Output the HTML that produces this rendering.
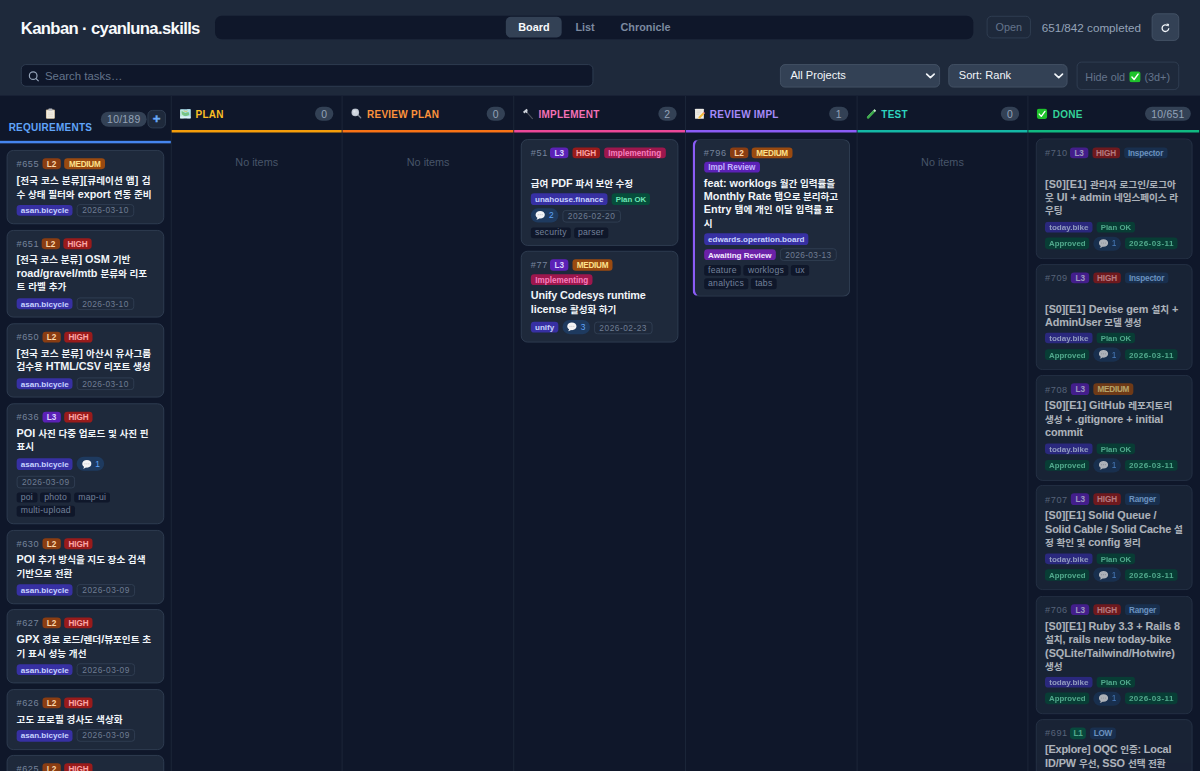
<!DOCTYPE html><html lang="ko"><head><meta charset="utf-8"><title>Kanban · cyanluna.skills</title><style>*{box-sizing:border-box;margin:0;padding:0}
html,body{width:1200px;height:771px;overflow:hidden;background:#0f172a}
body{font-family:"Liberation Sans","Noto Sans CJK KR",sans-serif;color:#f1f5f9}
#app{position:absolute;left:0;top:0;width:1440px;height:926px;transform:scale(.8333333);transform-origin:0 0;overflow:hidden;background:#0f172a}
.em{display:inline-block;flex:none}
#top{position:absolute;left:0;top:0;width:1440px;height:115px;background:#1e293b}
#top>*{position:absolute}
h1{left:25px;top:21.5px;font-size:20px;line-height:25px;font-weight:700;letter-spacing:-.78px;color:#f8fafc;white-space:nowrap}
.views{left:258px;top:18.5px;width:909.5px;height:28px;border-radius:8px;background:#0f172a;display:flex;justify-content:center;align-items:center;gap:2px;padding-left:1px}
.views span{height:24.5px;line-height:25.5px;padding:0 14.5px;border-radius:6px;font-size:13px;font-weight:700;color:#7c8aa0}
.views .on{background:#334155;color:#f8fafc}
.open{left:1184px;top:19.3px;width:53px;height:26.7px;border:1px solid #334155;border-radius:6px;font-size:13px;line-height:25.5px;text-align:center;color:#64748b}
.stat{left:1250px;top:24.8px;font-size:14px;line-height:17px;color:#94a3b8;white-space:nowrap}
.refresh{left:1382px;top:16.3px;width:33px;height:32.6px;border:1px solid #475569;border-radius:6px;background:#334155;display:flex;align-items:center;justify-content:center}
.search{left:24.5px;top:77px;width:687px;height:27px;border:1px solid #334155;border-radius:6px;background:#0f172a;display:flex;align-items:center;padding-left:8.5px;padding-top:1.5px;font-size:13.7px;color:#64748b;gap:7px}
.sel{top:77px;height:28px;border:1px solid #475569;border-radius:6px;background:#334155;font-size:13.3px;line-height:26px;color:#f1f5f9;padding-left:12px;white-space:nowrap}
.sel svg{position:absolute;right:3.5px;top:8px}
.hide{left:1291.5px;top:73.5px;width:123.5px;height:34px;border:1px solid #334155;border-radius:6px;font-size:13px;line-height:35px;color:#64748b;text-align:center;white-space:nowrap}
#board{position:absolute;left:0;top:115px;width:1440px;height:811px;background:#0f172a}
.col{position:absolute;top:0;width:205.714px;height:811px;border-right:1px solid #1e293b}
.ch{position:absolute;left:0;top:0;width:100%;border-bottom:3px solid #888;display:flex;align-items:center;padding:2.5px 10px 0 10px}
.ct{display:flex;align-items:center;gap:6px;font-size:12px;font-weight:700;letter-spacing:.3px;white-space:nowrap;flex:1}
.cc{background:#334155;color:#94a3b8;font-size:12.5px;line-height:19.6px;height:17.2px;padding:0 7.5px;border-radius:9px;letter-spacing:.3px;margin-top:.6px}
.ch1{padding:1.5px 6px 0 10px}
.ct1{flex-direction:column;gap:0;flex:none;width:101px;margin-right:10px;line-height:16.8px;margin-top:4.5px}.ct1 .em{height:16.8px}
.add{width:22px;height:22px;border:1px solid #334155;border-radius:6px;background:#1e293b;color:#6aa9f8;font-size:16px;font-weight:700;line-height:19px;text-align:center;margin-left:1px;-webkit-text-stroke:.5px #6aa9f8}
.c-req .ch{border-color:#4585ee}.c-req .cn{color:#60a5fa}
.c-plan .ch{border-color:#f59e0b}.c-plan .cn{color:#fbbf24}
.c-rplan .ch{border-color:#f97316}.c-rplan .cn{color:#fb923c}
.c-impl .ch{border-color:#ec4899}.c-impl .cn{color:#f472b6}
.c-rimpl .ch{border-color:#8b5cf6}.c-rimpl .cn{color:#a78bfa}
.c-test .ch{border-color:#14b8a6}.c-test .cn{color:#2dd4bf}
.c-done .ch{border-color:#10b981}.c-done .cn{color:#34d399}
.cb{position:absolute;left:0;top:0;width:100%;height:100%}
.empty{position:absolute;left:0;top:71px;width:100%;text-align:center;font-size:13px;line-height:17px;color:#475569}
.card{position:absolute;left:8.3px;width:188.4px;border:1px solid #334155;border-radius:8px;background:#1e293b;padding:10px 10px 0 10.5px;overflow:hidden}
.card.acc{border-left:3px solid #8b5cf6;padding-left:10.5px}
.c-done .card{opacity:.7}.c-done{border-right-color:transparent}
.r1{display:flex;align-items:center;gap:4.5px;height:13px;white-space:nowrap;margin-top:-.8px}
.r1b{margin-top:4.4px}.r1b+.title{margin-top:5.2px}
.id{font-size:11px;color:#76849b;line-height:13px;letter-spacing:.7px;margin-right:-.7px}
.b{font-size:9.8px;font-weight:700;line-height:13.4px;height:13.2px;padding:0 5.3px;border-radius:4px}
.l1{background:#065f46;color:#6ee7b7;padding:0 4.2px;letter-spacing:-.3px}
.l2{background:#8a3d12;color:#fed7aa}
.l3{background:#5b21b6;color:#ddd6fe}
.high{background:#991b1b;color:#fca5a5;letter-spacing:-.15px;padding:0 4.8px}
.med{background:#9a4a10;color:#fde08a;letter-spacing:-.3px}
.low{background:#1e3a5f;color:#93c5fd;letter-spacing:-.3px;padding:0 4.8px}
.impl{background:#9d174d;color:#f77fbe}
.irev{background:#5b21b6;color:#c4b5fd}
.agent{background:#1e3a5f;color:#93c5fd;letter-spacing:-.2px;padding:0 5px}
.title{margin-top:5.6px;padding-left:0;font-size:13px;line-height:16px;margin-bottom:.5px;font-weight:700;color:#f1f5f9;white-space:nowrap}
.title .k{font-size:11.5px}
.bot{position:absolute;left:10.5px;right:0;bottom:8px}.tags{display:flex;align-items:center;gap:4.8px;height:15px;white-space:nowrap}.tags.tc{height:17px}.tags.tp{height:13.4px}
.tags+.tags{margin-top:4.5px}.tags.tc+.tags{margin-top:5.5px}.tags:last-child{margin-bottom:.1px}.tags.tc:last-child{margin-bottom:1px}
.t{font-size:9.7px;line-height:13.4px;height:13.4px;padding:0 5px;border-radius:4px}
.proj{background:#3730a3;color:#c7d2fe;font-weight:700}
.ok{background:#064e3b;color:#6ee7b7;font-weight:700;font-size:9.4px;padding:0 4.8px}
.aw{background:#6b21a8;color:#f3e8ff;font-weight:700}
.date{border:1px solid #334155;color:#6f7d93;height:15px;line-height:13px;letter-spacing:.45px;padding:0 5.5px;font-size:10px}
.date.dd{border:0;background:#064e3b;color:#6ee7b7;font-weight:700;height:13.4px;line-height:13.4px;font-size:9.7px;padding:0 4.6px;top:0!important}
.cmt{background:#1e3a5f;color:#60a5fa;height:17px;border-radius:9px;display:flex;align-items:center;gap:4px;padding:0 5.5px;font-size:10px}.tc .date{position:relative;top:1px}
.labels{display:flex;gap:3.4px;margin-top:3.7px;height:12.6px;white-space:nowrap;margin-bottom:.5px}.tags+.labels{margin-top:4.8px}.tags.tc+.labels{margin-top:5.8px}
.lb{font-size:10.4px;line-height:12.4px;height:12.6px;padding:0 5px;border-radius:3px;background:#0f172a;color:#73819a;letter-spacing:.3px}
</style></head><body><div id="app"><header id="top">
<h1>Kanban · cyanluna.skills</h1>
<nav class="views"><span class="on">Board</span><span>List</span><span>Chronicle</span></nav>
<div class="open">Open</div>
<div class="stat">651/842 completed</div>
<div class="refresh"><svg width="13" height="13" viewBox="0 0 14 14" style="margin-top:2px"><path d="M11.3 7.4a4.3 4.3 0 1 1-1.4-3.3" fill="none" stroke="#f1f5f9" stroke-width="1.7"/><path d="M8.2 1.3l3.6.6-.8 3.7z" fill="#f1f5f9"/></svg></div>
<div class="search"><svg width="13" height="13" viewBox="0 0 13 13"><circle cx="5.8" cy="5.8" r="4.6" fill="none" stroke="#94a3b8" stroke-width="1.5"/><path d="M9.3 9.3l2.7 2.7" stroke="#94a3b8" stroke-width="1.5" stroke-linecap="round"/></svg><span>Search tasks…</span></div>
<div class="sel" style="left:935.5px;width:192px">All Projects<svg width="13" height="10" viewBox="0 0 13 10"><path d="M2 3l4.5 4.2L11 3" fill="none" stroke="#f1f5f9" stroke-width="2" stroke-linecap="round" stroke-linejoin="round"/></svg></div>
<div class="sel" style="left:1137.5px;width:143.5px">Sort: Rank<svg width="13" height="10" viewBox="0 0 13 10"><path d="M2 3l4.5 4.2L11 3" fill="none" stroke="#f1f5f9" stroke-width="2" stroke-linecap="round" stroke-linejoin="round"/></svg></div>
<div class="hide">Hide old <svg class="em" width="14" height="14" viewBox="0 0 16 16" style="vertical-align:-2px;margin:0 1px"><rect x=".3" y=".8" width="15.2" height="14.800" rx="3" fill="#1fc22c"/><path d="M3.800 8.500l3 3.400 5.400-7.400" fill="none" stroke="#fff" stroke-width="2" stroke-linecap="round" stroke-linejoin="round"/></svg> (3d+)</div>
</header>
<main id="board"><section class="col c-req" style="left:0px"><div class="ch ch1" style="height:57px"><span class="ct ct1"><svg class="em" width="13" height="13" viewBox="0 0 16 16" style=""><rect x="1.4" y="1.8" width="13.2" height="13.8" rx="1.4" fill="#c9b48f"/><rect x="2.3" y="3" width="11.4" height="11.8" rx=".6" fill="#f1ede2"/><rect x="5" y=".5" width="6" height="3.2" rx="1" fill="#b9bcc2"/><path d="M4.3 7h7.4M4.3 9.4h7.4M4.3 11.800h7.4" stroke="#dcd6c6" stroke-width=".9"/></svg><span class="cn">REQUIREMENTS</span></span><span class="cc">10/189</span><span class="add">+</span></div><div class="cb"><div class="card" style="top:65.0px;height:89.28px"><div class="r1"><span class="id">#655</span><span class="b l2">L2</span><span class="b med">MEDIUM</span></div><div class="title"><span style="letter-spacing:0.178px">[<span class="k">전국 코스 분류</span>][<span class="k">큐레이션 앱</span>] <span class="k">검</span></span><br><span style="letter-spacing:-0.014px"><span class="k">수 상태 필터와</span> export <span class="k">연동 준비</span></span></div><div class="bot"><div class="tags"><span class="t proj">asan.bicycle</span><span class="t date" style="letter-spacing:0.45px">2026-03-10</span></div></div></div><div class="card" style="top:160.51999999999998px;height:105.6px"><div class="r1"><span class="id" style="margin-right:-1.9px">#651</span><span class="b l2">L2</span><span class="b high">HIGH</span></div><div class="title"><span style="letter-spacing:0.011px">[<span class="k">전국 코스 분류</span>] OSM <span class="k">기반</span></span><br><span style="letter-spacing:-0.027px">road/gravel/mtb <span class="k">분류와 리포</span></span><br><span style="letter-spacing:0.092px"><span class="k">트 라벨 추가</span></span></div><div class="bot"><div class="tags"><span class="t proj">asan.bicycle</span><span class="t date" style="letter-spacing:0.45px">2026-03-10</span></div></div></div><div class="card" style="top:272.6px;height:89.52px"><div class="r1"><span class="id">#650</span><span class="b l2">L2</span><span class="b high">HIGH</span></div><div class="title"><span style="letter-spacing:0.119px">[<span class="k">전국 코스 분류</span>] <span class="k">아산시 유사그룹</span></span><br><span style="letter-spacing:-0.035px"><span class="k">검수용</span> HTML/CSV <span class="k">리포트 생성</span></span></div><div class="bot"><div class="tags"><span class="t proj">asan.bicycle</span><span class="t date" style="letter-spacing:0.45px">2026-03-10</span></div></div></div><div class="card" style="top:368.6px;height:145.44px"><div class="r1"><span class="id">#636</span><span class="b l3">L3</span><span class="b high">HIGH</span></div><div class="title"><span style="letter-spacing:0.004px">POI <span class="k">사진 다중 업로드 및 사진 핀</span></span><br><span style="letter-spacing:-0.054px"><span class="k">표시</span></span></div><div class="bot"><div class="tags tc"><span class="t proj">asan.bicycle</span><span class="t cmt"><svg class="em" width="12.5" height="12.5" viewBox="0 0 16 16" style=""><path d="M8 1.400C4 1.400.9 4 .9 7.200c0 1.900 1.100 3.600 2.800 4.600-.1 1-.7 2.100-1.600 2.900 1.700 0 3.300-.7 4.300-1.800.5.100 1.100.100 1.600.100 4 0 7.100-2.600 7.100-5.800S12 1.400 8 1.400z" fill="#f3f4f6"/><circle cx="5" cy="7.200" r=".9" fill="#c4c8cf"/><circle cx="8" cy="7.200" r=".9" fill="#c4c8cf"/><circle cx="11" cy="7.200" r=".9" fill="#c4c8cf"/></svg><span>1</span></span></div><div class="tags"><span class="t date" style="letter-spacing:0.6px">2026-03-09</span></div><div class="labels"><span class="lb">poi</span><span class="lb">photo</span><span class="lb">map-ui</span></div><div class="labels"><span class="lb">multi-upload</span></div></div></div><div class="card" style="top:520.52px;height:89.28px"><div class="r1"><span class="id">#630</span><span class="b l2">L2</span><span class="b high">HIGH</span></div><div class="title"><span style="letter-spacing:-0.023px">POI <span class="k">추가 방식을 지도 장소 검색</span></span><br><span style="letter-spacing:0.065px"><span class="k">기반으로 전환</span></span></div><div class="bot"><div class="tags"><span class="t proj">asan.bicycle</span><span class="t date" style="letter-spacing:0.6px">2026-03-09</span></div></div></div><div class="card" style="top:616.16px;height:88.8px"><div class="r1"><span class="id">#627</span><span class="b l2">L2</span><span class="b high">HIGH</span></div><div class="title"><span style="letter-spacing:0.015px">GPX <span class="k">경로 로드</span>/<span class="k">렌더</span>/<span class="k">뷰포인트 초</span></span><br><span style="letter-spacing:0.035px"><span class="k">기 표시 성능 개선</span></span></div><div class="bot"><div class="tags"><span class="t proj">asan.bicycle</span><span class="t date" style="letter-spacing:0.6px">2026-03-09</span></div></div></div><div class="card" style="top:712.04px;height:72.48px"><div class="r1"><span class="id">#626</span><span class="b l2">L2</span><span class="b high">HIGH</span></div><div class="title"><span style="letter-spacing:0.11px"><span class="k">고도 프로필 경사도 색상화</span></span></div><div class="bot"><div class="tags"><span class="t proj">asan.bicycle</span><span class="t date" style="letter-spacing:0.6px">2026-03-09</span></div></div></div><div class="card" style="top:791.0px;height:89.52px"><div class="r1"><span class="id">#625</span><span class="b l2">L2</span><span class="b high">HIGH</span></div><div class="title"></div><div class="bot"></div></div></div></section><section class="col c-plan" style="left:205.714px"><div class="ch" style="height:43.6px"><span class="ct"><svg class="em" width="13" height="13" viewBox="0 0 16 16" style=""><rect x=".3" y="1.2" width="15.4" height="13.6" rx=".9" fill="#a9dff0"/><path d="M.3 2.100h5.100v12.700H.3z" fill="#bfe9dc"/><path d="M10.600 1.200h5.100v13.600h-5.100z" fill="#b3e3ee"/><path d="M2.200 4.500c2.300-.6 3.200 2 5.300 2.200s2.800-1.600 5.800-.6l.4 3.600c-3 .8-4.300 2.300-6.600 1.700s-2.600-2.300-4.300-2.300z" fill="#6fbf73" opacity=".85"/><path d="M5.500 3.600l3.300 1.200 2.400-1.200" stroke="#ecc94b" stroke-width="1.2" fill="none"/><rect x=".3" y="12" width="15.4" height="2.8" fill="#e4f4f7" opacity=".9"/></svg><span class="cn">PLAN</span></span><span class="cc">0</span></div><div class="cb"><div class="empty">No items</div></div></section><section class="col c-rplan" style="left:411.429px"><div class="ch" style="height:43.6px"><span class="ct"><svg class="em" width="13" height="13" viewBox="0 0 16 16" style=""><path d="M10.200 9.600l4.500 4.400" stroke="#7d8591" stroke-width="1.900" stroke-linecap="round"/><circle cx="6.600" cy="6" r="5.600" fill="#b9c0cb"/><circle cx="6.600" cy="6" r="4.300" fill="#cfd5de"/><circle cx="5.300" cy="4.700" r="1.700" fill="#e3e7ed" opacity=".9"/></svg><span class="cn">REVIEW PLAN</span></span><span class="cc">0</span></div><div class="cb"><div class="empty">No items</div></div></section><section class="col c-impl" style="left:617.143px"><div class="ch" style="height:43.6px"><span class="ct"><svg class="em" width="13" height="13" viewBox="0 0 16 16" style=""><path d="M6.200 5.600l8.800 10" stroke="#4b4f5c" stroke-width="1.700" stroke-linecap="round"/><path d="M.8 5.200L6 .6l2.100 2.200-1.500 1.300 1.200 1.400-1.900 1.700-1.200-1.400-2.200 1.900z" fill="#cdd2da"/></svg><span class="cn">IMPLEMENT</span></span><span class="cc">2</span></div><div class="cb"><div class="card" style="top:51.56px;height:128.52px"><div class="r1"><span class="id" style="margin-right:-1.9px">#51</span><span class="b l3">L3</span><span class="b high">HIGH</span><span class="b impl">Implementing</span></div><div class="title" style="margin-top:22.6px"><span style="letter-spacing:-0.112px"><span class="k">급여</span> PDF <span class="k">파서 보안 수정</span></span></div><div class="bot"><div class="tags tp"><span class="t proj">unahouse.finance</span><span class="t ok">Plan OK</span></div><div class="tags tc"><span class="t cmt"><svg class="em" width="12.5" height="12.5" viewBox="0 0 16 16" style=""><path d="M8 1.400C4 1.400.9 4 .9 7.200c0 1.900 1.100 3.600 2.800 4.600-.1 1-.7 2.100-1.600 2.900 1.700 0 3.300-.7 4.300-1.800.5.100 1.100.100 1.600.100 4 0 7.100-2.600 7.100-5.800S12 1.400 8 1.400z" fill="#f3f4f6"/><circle cx="5" cy="7.200" r=".9" fill="#c4c8cf"/><circle cx="8" cy="7.200" r=".9" fill="#c4c8cf"/><circle cx="11" cy="7.200" r=".9" fill="#c4c8cf"/></svg><span>2</span></span><span class="t date" style="letter-spacing:0.6px">2026-02-20</span></div><div class="labels"><span class="lb">security</span><span class="lb">parser</span></div></div></div><div class="card" style="top:186.32px;height:109.68px"><div class="r1"><span class="id" style="margin-right:-1.7px">#77</span><span class="b l3">L3</span><span class="b med">MEDIUM</span></div><div class="r1 r1b"><span class="b impl">Implementing</span></div><div class="title"><span style="letter-spacing:-0.173px">Unify Codesys runtime</span><br><span style="letter-spacing:-0.081px">license <span class="k">활성화 하기</span></span></div><div class="bot"><div class="tags tc"><span class="t proj">unify</span><span class="t cmt"><svg class="em" width="12.5" height="12.5" viewBox="0 0 16 16" style=""><path d="M8 1.400C4 1.400.9 4 .9 7.200c0 1.900 1.100 3.600 2.800 4.600-.1 1-.7 2.100-1.600 2.900 1.700 0 3.300-.7 4.300-1.800.5.100 1.100.100 1.600.100 4 0 7.100-2.600 7.100-5.800S12 1.400 8 1.400z" fill="#f3f4f6"/><circle cx="5" cy="7.200" r=".9" fill="#c4c8cf"/><circle cx="8" cy="7.200" r=".9" fill="#c4c8cf"/><circle cx="11" cy="7.200" r=".9" fill="#c4c8cf"/></svg><span>3</span></span><span class="t date" style="letter-spacing:0.6px">2026-02-23</span></div></div></div></div></section><section class="col c-rimpl" style="left:822.857px"><div class="ch" style="height:43.6px"><span class="ct"><svg class="em" width="13" height="13" viewBox="0 0 16 16" style=""><rect x="1.300" y=".6" width="13" height="14.800" rx=".9" fill="#eeece6"/><path d="M3.400 4h7.600M3.400 6.400h6.400M3.400 8.800h4" stroke="#d2cfc4" stroke-width=".9"/><path d="M6.400 12.900l6.600-6.700 2 2-6.600 6.700-2.700.7z" fill="#f2b832"/><path d="M13 6.200l1.100-1.100 2 2-1.100 1.100z" fill="#e8788a"/><path d="M6.400 12.900l2 2-2.700.7z" fill="#f5d9a8"/></svg><span class="cn">REVIEW IMPL</span></span><span class="cc">1</span></div><div class="cb"><div class="card acc" style="top:51.56px;height:189.84px"><div class="r1"><span class="id">#796</span><span class="b l2">L2</span><span class="b med">MEDIUM</span></div><div class="r1 r1b"><span class="b irev">Impl Review</span></div><div class="title"><span style="letter-spacing:-0.046px">feat: worklogs <span class="k">월간 입력률을</span></span><br><span style="letter-spacing:-0.071px">Monthly Rate <span class="k">탭으로 분리하고</span></span><br><span style="letter-spacing:0.009px">Entry <span class="k">탭에 개인 이달 입력률 표</span></span><br><span style="letter-spacing:-0.414px"><span class="k">시</span></span></div><div class="bot"><div class="tags tp"><span class="t proj">edwards.operation.board</span></div><div class="tags"><span class="t aw">Awaiting Review</span><span class="t date" style="letter-spacing:0.45px">2026-03-13</span></div><div class="labels"><span class="lb">feature</span><span class="lb">worklogs</span><span class="lb">ux</span></div><div class="labels"><span class="lb">analytics</span><span class="lb">tabs</span></div></div></div></div></section><section class="col c-test" style="left:1028.571px"><div class="ch" style="height:43.6px"><span class="ct"><svg class="em" width="13" height="13" viewBox="0 0 16 16" style=""><path d="M12.800 1.200l2.400 2.400L4.900 14.800a1.900 1.900 0 0 1-2.900-2.600z" fill="#3dab4b"/><path d="M12.800 1.200l2.400 2.400-1.900 2-2.400-2.400z" fill="#cfe0d3"/><path d="M11.300 2.800L2.500 12.400" stroke="#74cf80" stroke-width=".9" opacity=".8"/></svg><span class="cn">TEST</span></span><span class="cc">0</span></div><div class="cb"><div class="empty">No items</div></div></section><section class="col c-done" style="left:1234.286px"><div class="ch" style="height:43.6px"><span class="ct"><svg class="em" width="13" height="13" viewBox="0 0 16 16" style=""><rect x=".3" y=".8" width="15.2" height="14.800" rx="3" fill="#1fc22c"/><path d="M3.800 8.500l3 3.400 5.400-7.400" fill="none" stroke="#fff" stroke-width="2" stroke-linecap="round" stroke-linejoin="round"/></svg><span class="cn">DONE</span></span><span class="cc">10/651</span></div><div class="cb"><div class="card" style="top:51.44px;height:144.12px"><div class="r1"><span class="id" style="margin-right:-1.9px">#710</span><span class="b l3">L3</span><span class="b high">HIGH</span><span class="b agent">Inspector</span></div><div class="title" style="margin-top:23.2px"><span style="letter-spacing:0.119px">[S0][E1] <span class="k">관리자 로그인</span>/<span class="k">로그아</span></span><br><span style="letter-spacing:-0.082px"><span class="k">웃</span> UI + admin <span class="k">네임스페이스 라</span></span><br><span style="letter-spacing:-0.215px"><span class="k">우팅</span></span></div><div class="bot"><div class="tags tp"><span class="t proj">today.bike</span><span class="t ok">Plan OK</span></div><div class="tags tc"><span class="t ok">Approved</span><span class="t cmt"><svg class="em" width="12.5" height="12.5" viewBox="0 0 16 16" style=""><path d="M8 1.400C4 1.400.9 4 .9 7.200c0 1.900 1.100 3.600 2.800 4.600-.1 1-.7 2.100-1.600 2.900 1.700 0 3.300-.7 4.300-1.800.5.100 1.100.100 1.600.100 4 0 7.100-2.600 7.100-5.800S12 1.400 8 1.400z" fill="#f3f4f6"/><circle cx="5" cy="7.200" r=".9" fill="#c4c8cf"/><circle cx="8" cy="7.200" r=".9" fill="#c4c8cf"/><circle cx="11" cy="7.200" r=".9" fill="#c4c8cf"/></svg><span>1</span></span><span class="t date dd" style="letter-spacing:0.5px">2026-03-11</span></div></div></div><div class="card" style="top:201.92000000000002px;height:126.96px"><div class="r1"><span class="id">#709</span><span class="b l3">L3</span><span class="b high">HIGH</span><span class="b agent">Inspector</span></div><div class="title" style="margin-top:23.2px"><span style="letter-spacing:-0.049px">[S0][E1] Devise gem <span class="k">설치</span> +</span><br><span style="letter-spacing:-0.188px">AdminUser <span class="k">모델 생성</span></span></div><div class="bot"><div class="tags tp"><span class="t proj">today.bike</span><span class="t ok">Plan OK</span></div><div class="tags tc"><span class="t ok">Approved</span><span class="t cmt"><svg class="em" width="12.5" height="12.5" viewBox="0 0 16 16" style=""><path d="M8 1.400C4 1.400.9 4 .9 7.200c0 1.900 1.100 3.600 2.800 4.600-.1 1-.7 2.100-1.600 2.900 1.700 0 3.300-.7 4.300-1.800.5.100 1.100.100 1.600.100 4 0 7.100-2.600 7.100-5.800S12 1.400 8 1.400z" fill="#f3f4f6"/><circle cx="5" cy="7.200" r=".9" fill="#c4c8cf"/><circle cx="8" cy="7.200" r=".9" fill="#c4c8cf"/><circle cx="11" cy="7.200" r=".9" fill="#c4c8cf"/></svg><span>1</span></span><span class="t date dd" style="letter-spacing:0.5px">2026-03-11</span></div></div></div><div class="card" style="top:335.36px;height:126.6px"><div class="r1"><span class="id">#708</span><span class="b l3">L3</span><span class="b med">MEDIUM</span></div><div class="title"><span style="letter-spacing:0.002px">[S0][E1] GitHub <span class="k">레포지토리</span></span><br><span style="letter-spacing:-0.086px"><span class="k">생성</span> + .gitignore + initial</span><br><span style="letter-spacing:-0.169px">commit</span></div><div class="bot"><div class="tags tp"><span class="t proj">today.bike</span><span class="t ok">Plan OK</span></div><div class="tags tc"><span class="t ok">Approved</span><span class="t cmt"><svg class="em" width="12.5" height="12.5" viewBox="0 0 16 16" style=""><path d="M8 1.400C4 1.400.9 4 .9 7.200c0 1.900 1.100 3.600 2.800 4.600-.1 1-.7 2.100-1.600 2.900 1.700 0 3.300-.7 4.300-1.800.5.100 1.100.100 1.600.100 4 0 7.100-2.600 7.100-5.800S12 1.400 8 1.400z" fill="#f3f4f6"/><circle cx="5" cy="7.200" r=".9" fill="#c4c8cf"/><circle cx="8" cy="7.200" r=".9" fill="#c4c8cf"/><circle cx="11" cy="7.200" r=".9" fill="#c4c8cf"/></svg><span>1</span></span><span class="t date dd" style="letter-spacing:0.5px">2026-03-11</span></div></div></div><div class="card" style="top:467.36px;height:126.12px"><div class="r1"><span class="id">#707</span><span class="b l3">L3</span><span class="b high">HIGH</span><span class="b agent">Ranger</span></div><div class="title"><span style="letter-spacing:-0.097px">[S0][E1] Solid Queue /</span><br><span style="letter-spacing:-0.195px">Solid Cable / Solid Cache <span class="k">설</span></span><br><span style="letter-spacing:-0.088px"><span class="k">정 확인 및</span> config <span class="k">정리</span></span></div><div class="bot"><div class="tags tp"><span class="t proj">today.bike</span><span class="t ok">Plan OK</span></div><div class="tags tc"><span class="t ok">Approved</span><span class="t cmt"><svg class="em" width="12.5" height="12.5" viewBox="0 0 16 16" style=""><path d="M8 1.400C4 1.400.9 4 .9 7.200c0 1.900 1.100 3.600 2.800 4.600-.1 1-.7 2.100-1.600 2.900 1.700 0 3.300-.7 4.300-1.800.5.100 1.100.100 1.600.100 4 0 7.100-2.600 7.100-5.800S12 1.400 8 1.400z" fill="#f3f4f6"/><circle cx="5" cy="7.200" r=".9" fill="#c4c8cf"/><circle cx="8" cy="7.200" r=".9" fill="#c4c8cf"/><circle cx="11" cy="7.200" r=".9" fill="#c4c8cf"/></svg><span>1</span></span><span class="t date dd" style="letter-spacing:0.5px">2026-03-11</span></div></div></div><div class="card" style="top:600.08px;height:141.48px"><div class="r1"><span class="id">#706</span><span class="b l3">L3</span><span class="b high">HIGH</span><span class="b agent">Ranger</span></div><div class="title"><span style="letter-spacing:-0.062px">[S0][E1] Ruby 3.3 + Rails 8</span><br><span style="letter-spacing:-0.052px"><span class="k">설치</span>, rails new today-bike</span><br><span style="letter-spacing:-0.025px">(SQLite/Tailwind/Hotwire)</span><br><span style="letter-spacing:-0.215px"><span class="k">생성</span></span></div><div class="bot"><div class="tags tp"><span class="t proj">today.bike</span><span class="t ok">Plan OK</span></div><div class="tags tc"><span class="t ok">Approved</span><span class="t cmt"><svg class="em" width="12.5" height="12.5" viewBox="0 0 16 16" style=""><path d="M8 1.400C4 1.400.9 4 .9 7.200c0 1.900 1.100 3.600 2.800 4.600-.1 1-.7 2.100-1.600 2.900 1.700 0 3.300-.7 4.300-1.800.5.100 1.100.100 1.600.100 4 0 7.100-2.600 7.100-5.800S12 1.400 8 1.400z" fill="#f3f4f6"/><circle cx="5" cy="7.200" r=".9" fill="#c4c8cf"/><circle cx="8" cy="7.200" r=".9" fill="#c4c8cf"/><circle cx="11" cy="7.200" r=".9" fill="#c4c8cf"/></svg><span>1</span></span><span class="t date dd" style="letter-spacing:0.5px">2026-03-11</span></div></div></div><div class="card" style="top:748.28px;height:120.72px"><div class="r1"><span class="id" style="margin-right:-1.9px">#691</span><span class="b l1">L1</span><span class="b low">LOW</span></div><div class="title"><span style="letter-spacing:-0.211px">[Explore] OQC <span class="k">인증</span>: Local</span><br><span style="letter-spacing:-0.089px">ID/PW <span class="k">우선</span>, SSO <span class="k">선택 전환</span></span></div><div class="bot"></div></div></div></section></main></div></body></html>
